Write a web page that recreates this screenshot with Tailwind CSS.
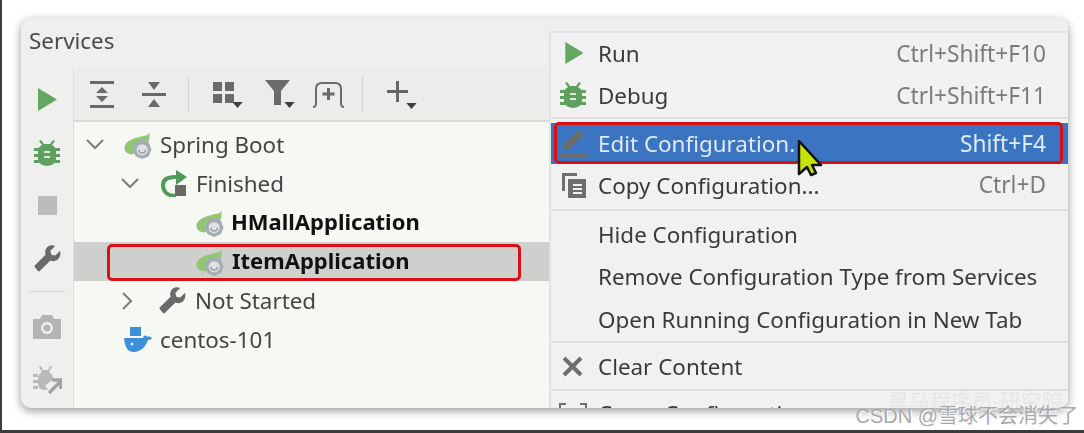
<!doctype html>
<html lang="en">
<head>
  <meta charset="utf-8">
  <title>Services</title>
  <script src="https://cdn.jsdelivr.net/npm/@tailwindcss/browser@4"></script>
</head>
<body class="w-[1084px] h-[433px] overflow-hidden bg-white font-['Noto_Sans',sans-serif] text-[22.4px] text-[#3a3a3a] relative border-l-2 border-b-[3px] border-[#3b3b3b]">

  <svg class="hidden">
    <symbol id="run" viewBox="0 0 20 24"><path fill="#62a863" d="M0 0l20 12L0 24z"/></symbol>
    <symbol id="bug" viewBox="0 0 26 26"><g fill="#5f9f60"><path d="M5 1l2-1 3 4h6l3-4 2 1-3 4q4 2 4 6v8q0 6-9 7-9-1-9-7v-8q0-4 4-6z"/><path d="M0 8h5v3H0zM21 8h5v3h-5zM0 14h5v3H0zM21 14h5v3h-5zM0 20h5v3H0zM21 20h5v3h-5z"/></g><path fill="#dfe8dc" d="M10 11h6v2h-6zM10 16h6v2h-6z"/></symbol>
    <symbol id="wrench" viewBox="0 0 28 28"><path fill="#6a6a6a" d="M27 6l-5 5-4-1-1-4 5-5c-4-2-9 0-10 4-1 2 0 4 0 5L1 21q-1 1 0 2l3 4q1 1 2 0l11-11c2 1 4 1 6 0 4-2 5-6 4-10z"/></symbol>
    <symbol id="caret" viewBox="0 0 12 7"><path fill="#3f3f3f" d="M0 0h12L6 7z"/></symbol>
    <symbol id="spring" viewBox="0 0 30 30"><path fill="#93c672" d="M28 0c-1 4-5 4-10 5C10 7 1 10 1 17c0 4 3 7 9 7l10-6 7-8c1-3 1-7 1-10z"/><path fill="#a4acb4" d="M13 11l7-3 7 3 3 8-3 7-7 3-7-3-3-7z"/><circle cx="20" cy="19" r="6" fill="#dfe3e6"/><path fill="none" stroke="#98a0a8" stroke-width="1.6" d="M16.500 19a3.500 3.500 0 0 0 7 0"/></symbol>
  </svg>

  <main class="absolute left-[19px] top-[18px] w-[1047px] h-[390px] rounded-[10px] overflow-hidden bg-[#eff0ee] shadow-[0_3px_10px_rgba(0,0,0,0.4)] blur-[0.5px] flex flex-col">
    <header class="h-[50px] shrink-0 flex items-center pl-2 pb-1 text-[#4a4a4a]">Services</header>
    <div class="flex flex-1 min-h-0">

      <aside class="w-[53px] shrink-0 border-r border-[#dcdddb] flex flex-col items-center pt-[5px]">
        <div class="h-[53px] flex items-center"><svg width="19" height="23"><use href="#run"/></svg></div>
        <div class="h-[53px] flex items-center"><svg width="26" height="26"><use href="#bug"/></svg></div>
        <div class="h-[53px] flex items-center"><div class="w-[19px] h-[19px] bg-[#bcbcbc]"></div></div>
        <div class="h-[53px] flex items-center"><svg width="27" height="27"><use href="#wrench"/></svg></div>
        <div class="w-9 h-px bg-[#d2d3d1] my-[6px]"></div>
        <div class="h-[53px] mt-[2px] flex items-center">
          <svg width="28" height="24" viewBox="0 0 28 24"><path fill="#b4b4b4" d="M0 4h7l2-4h10l2 4h7v20H0z"/><circle cx="14" cy="13" r="6" fill="#f0f1ef"/><circle cx="14" cy="13" r="3.5" fill="#b4b4b4"/></svg>
        </div>
        <div class="h-[53px] flex items-center">
          <svg width="30" height="28" viewBox="0 0 30 28"><g fill="#b9b9b9"><path d="M7 1l2-1 2 4h5l2-4 2 1-3 5q4 2 4 7H6q0-5 4-7z"/><path d="M6 13h15l-8 7 3 3q-1 1-4 1-6-1-6-6z"/><path d="M1 8h5v3H1zM1 14h5v3H1zM1 20h5v3H1z"/></g><path fill="none" stroke="#a3a3a3" stroke-width="3.5" d="M17 27L28 16M20 14h9v9"/></svg>
        </div>
      </aside>

      <section class="flex-1 flex flex-col min-w-0">
        <nav class="h-[54px] shrink-0 bg-[#ecedeb] border-b-2 border-[#d9dad8] flex items-center relative">
          <div class="w-[24px] ml-[16px] flex justify-center">
            <svg width="24" height="27" viewBox="0 0 24 27"><path fill="#6a6a6a" d="M0 0h24v3H0zM0 24h24v3H0zM12 6l6 6H6zM12 21l-6-6h12z"/></svg>
          </div>
          <div class="w-[24px] ml-[28px] flex justify-center">
            <svg width="24" height="25" viewBox="0 0 24 25"><path fill="#6a6a6a" d="M0 11h24v3H0zM6 0h12l-6 8zM12 17l6 8H6z"/></svg>
          </div>
          <div class="w-px h-9 bg-[#d5d6d4] ml-[22px]"></div>
          <div class="ml-6 relative w-[28px] h-[28px]">
            <svg width="22" height="22" viewBox="0 0 22 22" class="mt-[2px]"><path fill="#6a6a6a" d="M0 0h9v9H0zM12 0h9v9h-9zM0 12h9v9H0zM12 12h9v9h-9z"/></svg>
            <svg width="11" height="6" class="absolute right-[-2px] bottom-0"><use href="#caret"/></svg>
          </div>
          <div class="ml-[24px] relative w-[28px] h-[28px]">
            <svg width="25" height="25" viewBox="0 0 25 25"><path fill="#6a6a6a" d="M0 0h25L16 11v14H9V11z"/></svg>
            <svg width="11" height="6" class="absolute right-[-2px] bottom-0"><use href="#caret"/></svg>
          </div>
          <div class="ml-[19px]">
            <svg width="33" height="27" viewBox="0 0 33 27" class="block"><path fill="none" stroke="#6a6a6a" stroke-width="2" d="M1 26c3 0 3-2 3-5V8q0-6 6-6h13q6 0 6 6v13c0 3 0 5 3 5"/><path fill="none" stroke="#6a6a6a" stroke-width="3" d="M16.500 7v12M10.500 13h12"/></svg>
          </div>
          <div class="w-px h-9 bg-[#d5d6d4] ml-[17px]"></div>
          <div class="ml-6 relative w-[28px] h-[28px]">
            <svg width="21" height="21" viewBox="0 0 21 21" class="mt-[1px]"><path fill="#666" d="M9 0h3v9h9v3h-9v9H9v-9H0V9h9z"/></svg>
            <svg width="11" height="6" class="absolute right-[-2px] bottom-[-1px]"><use href="#caret"/></svg>
          </div>
        </nav>

        <div class="flex-1 bg-[#f6f8f4] pt-[3px] text-[#444]">
          <div class="h-[39px] flex items-center pl-[12px]">
            <svg width="18" height="11" viewBox="0 0 18 11"><path fill="none" stroke="#7d7d7d" stroke-width="2" d="M1 1l8 8 8-8"/></svg>
            <svg width="29" height="28" class="ml-[19px] mt-[3px]"><use href="#spring"/></svg>
            <span class="ml-2">Spring Boot</span>
          </div>
          <div class="h-[39px] flex items-center pl-[47px]">
            <svg width="18" height="11" viewBox="0 0 18 11"><path fill="none" stroke="#7d7d7d" stroke-width="2" d="M1 1l8 8 8-8"/></svg>
            <svg width="27" height="27" viewBox="0 0 27 27" class="ml-[22px]"><path fill="none" stroke="#4f9a58" stroke-width="4" d="M15 26C6 26 2 21 2 15S7 7 14 7h6"/><path fill="#4f9a58" d="M15 0l11 7-11 8z"/><path fill="#6a6a6a" d="M14 15h11v11H14z"/></svg>
            <span class="ml-[8px]">Finished</span>
          </div>
          <div class="h-[39px] flex items-center pl-[121px]">
            <svg width="29" height="28" class="mt-[2px]"><use href="#spring"/></svg>
            <span class="ml-[7px] pb-[2px] font-bold text-[22px] text-[#111]">HMallApplication</span>
          </div>
          <div class="h-[39px] flex items-center pl-[121px] bg-[#cfd0ce]">
            <svg width="29" height="28" class="mt-[2px]"><use href="#spring"/></svg>
            <span class="ml-[8px] pb-[2px] font-bold text-[22px] text-[#111]">ItemApplication</span>
          </div>
          <div class="h-[39px] flex items-center pl-[47px]">
            <svg width="11" height="18" viewBox="0 0 11 18" class="ml-[1px]"><path fill="none" stroke="#7d7d7d" stroke-width="2" d="M1 1l8 8-8 8"/></svg>
            <svg width="27" height="27" class="ml-[26px]"><use href="#wrench"/></svg>
            <span class="ml-[9px]">Not Started</span>
          </div>
          <div class="h-[39px] flex items-center pl-[49px]">
            <svg width="29" height="25" viewBox="0 0 29 25"><path fill="#3d8fdc" d="M7 0h11v9H7zM1 11h19c1-3 3-3 4-1 2-1 4 0 5 1-1 2-3 2-4 2-2 7-8 12-14 12-6 0-9-4-10-14z"/><circle cx="9" cy="17" r="1.500" fill="#dbeafa"/></svg>
            <span class="ml-2">centos-101</span>
          </div>
        </div>
      </section>
    </div>

    <!-- context menu sits over the tree -->
    <div class="absolute left-[528px] top-[13px] w-[519px] h-[377px] overflow-hidden bg-[#f1f1f1] border-l-2 border-t-2 border-[#e3e3e3]">
      <div class="h-[41px] flex items-center justify-between pl-[14px] pr-[22px]">
        <span class="flex items-center"><svg width="19" height="22"><use href="#run"/></svg><span class="ml-[14px]">Run</span></span>
        <span class="pt-[2px] text-[22.7px] text-[#7b7b7b]">Ctrl+Shift+F10</span>
      </div>
      <div class="h-[43px] flex items-center justify-between pl-[9px] pr-[22px]">
        <span class="flex items-center"><svg width="26" height="26"><use href="#bug"/></svg><span class="ml-3">Debug</span></span>
        <span class="pt-[2px] text-[22.7px] text-[#7b7b7b]">Ctrl+Shift+F11</span>
      </div>
      <div class="h-[6px] border-t-2 border-[#dededd]"></div>
      <div class="h-[41px] flex items-center justify-between pl-[9px] pr-[22px] bg-[#3b75c1] text-[#dfeafa]">
        <span class="flex items-center">
          <svg width="27" height="27" viewBox="0 0 27 27"><path fill="#6b6b6b" d="M19 0l5 5L8 20H3v-5zM0 24h27v3H0z"/></svg>
          <span class="ml-[11px]">Edit Configuration.</span>
        </span>
        <span class="pt-[2px] text-[22.7px]">Shift+F4</span>
      </div>
      <div class="h-[43px] mb-[2px] flex items-center justify-between pl-[11px] pr-[22px]">
        <span class="flex items-center">
          <svg width="24" height="25" viewBox="0 0 24 25"><path fill="#6f6f6f" d="M0 0h15v3H3v15H0z"/><path fill="#6f6f6f" d="M6 6h18v19H6z"/><path fill="#f1f1f1" d="M11 11h9v2h-9zM11 15h9v2h-9zM11 19h9v2h-9z"/></svg>
          <span class="ml-3">Copy Configuration...</span>
        </span>
        <span class="text-[22.7px] text-[#7b7b7b]">Ctrl+D</span>
      </div>
      <div class="h-[5px] border-t-2 border-[#dededd]"></div>
      <div class="h-[41px] flex items-center pl-[47px]">Hide Configuration</div>
      <div class="h-[43px] flex items-center pl-[47px]">Remove Configuration Type from Services</div>
      <div class="h-[43px] flex items-center pl-[47px]">Open Running Configuration in New Tab</div>
      <div class="h-[5px] border-t-2 border-[#dededd]"></div>
      <div class="h-[41px] mb-[2px] flex items-center pl-[11px]">
        <svg width="21" height="21" viewBox="0 0 21 21"><path fill="none" stroke="#6f6f6f" stroke-width="4" d="M2 2l17 17M19 2L2 19"/></svg>
        <span class="ml-[15px]">Clear Content</span>
      </div>
      <div class="h-[5px] border-t-2 border-[#dededd]"></div>
      <div class="h-[40px] flex items-center pl-[8px]">
        <svg width="28" height="22" viewBox="0 0 28 22"><path fill="none" stroke="#6f6f6f" stroke-width="2" d="M7 1H1v20h6M21 1h6v20h-6M8 8h8"/></svg>
        <span class="ml-[11px]">Cover Configuration</span>
      </div>
      <div class="absolute right-[5px] bottom-[-1px] text-[21px] leading-[17px] text-[#e6e6e6] font-['Noto_Sans_CJK_SC',sans-serif]">黑马程序员-研究院</div>
    </div>
  </main>

  <!-- highlight boxes drawn on top of the screenshot -->
  <div class="absolute left-[105px] top-[244px] w-[414px] h-[37px] rounded-[5px] border-[3px] border-[#d80f16] blur-[0.3px]"></div>
  <div class="absolute left-[552px] top-[122px] w-[509px] h-[42px] rounded-[5px] border-[3px] border-[#d80f16] blur-[0.3px]"></div>

  <!-- mouse pointer -->
  <svg class="absolute left-[795px] top-[139px]" width="26" height="38" viewBox="0 0 26 38"><path fill="#c6e400" stroke="#111" stroke-width="2.500" stroke-linejoin="round" d="M2 2l22 24h-9l4 8-5 2-4-8-8 7z"/></svg>

  <div class="absolute right-[6px] top-[403px] text-[20px] leading-[26px] text-[#a9a9a9] font-['Liberation_Sans','Noto_Sans_CJK_SC',sans-serif] [text-shadow:1px_1px_0_#fff]">CSDN @雪球不会消失了</div>
</body>
</html>
